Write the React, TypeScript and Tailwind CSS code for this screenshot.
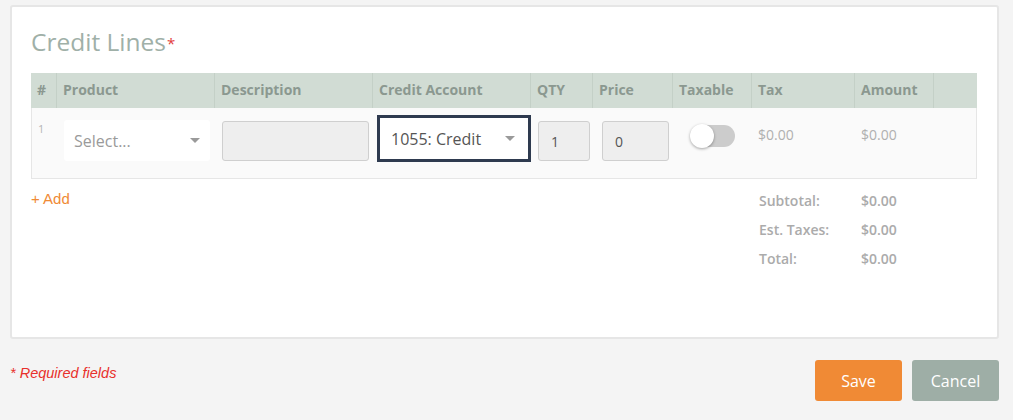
import React, { useState } from 'react';

const cols = 'grid grid-cols-[26px_158px_158px_158px_62px_80px_79px_103px_79px_1fr]';

const headers = ['#', 'Product', 'Description', 'Credit Account', 'QTY', 'Price', 'Taxable', 'Tax', 'Amount', ''];

const Caret = () => (
  <svg width="10" height="6" viewBox="0 0 10 6" className="shrink-0">
    <path d="M0 0h10L5 5z" fill="#9a9a9a" />
  </svg>
);

const App: React.FC = () => {
  const [taxable, setTaxable] = useState(false);

  return (
    <div className="w-[1013px] h-[420px] bg-[#f4f4f4] pt-[5px] pl-[10px] font-['Open_Sans',sans-serif]">
      <div className="w-[989px] h-[334px] bg-white border-2 border-[#e6e6e6] rounded-[3px] px-[19px] pt-[19px]">
        <h2 className="text-[24.5px] leading-[32px] text-[#9fb0a8] flex items-start">
          Credit Lines<span className="text-[#e23b3b] text-[15px] leading-[20px] mt-[7px] ml-[1px]">*</span>
        </h2>

        <div className="mt-[15px] w-[946px]">
          <div className={`${cols} bg-[#d1dcd4] h-[35px] text-[14px] font-bold text-[#8b9890]`}>
            {headers.map((h, i) => (
              <div
                key={i}
                className={`flex items-center px-[6px] pb-[2px] ${i < headers.length - 1 ? 'border-r border-[#c4d0c7]' : ''}`}
              >
                {h}
              </div>
            ))}
          </div>

          <div className={`${cols} bg-[#fafafa] border border-t-0 border-[#e6e6e6] h-[71px] text-[14px]`}>
            <div className="pl-[6px] pt-[13px] text-[11px] text-[#b5b5b5]">1</div>
            <div className="pl-[6px] pr-[6px] pt-[12px]">
              <div className="h-[41px] bg-white rounded-[3px] flex items-center justify-between pl-[10px] pr-[10px] text-[16px] text-[#9a9a9a]">
                <span>Select...</span>
                <Caret />
              </div>
            </div>
            <div className="pl-[6px] pr-[5px] pt-[13px]">
              <div className="h-[40px] bg-[#eeeeee] border border-[#cfcfcf] rounded-[3px]" />
            </div>
            <div className="pl-[3px] pr-[1px] pt-[7px]">
              <div className="h-[47px] bg-white border-[3px] border-[#2e3a4f] flex items-center justify-between pl-[11px] pr-[13px] text-[16px] text-[#555]">
                <span>1055: Credit</span>
                <Caret />
              </div>
            </div>
            <div className="pl-[6px] pr-[4px] pt-[13px]">
              <div className="h-[40px] bg-[#eeeeee] border border-[#cfcfcf] rounded-[3px] flex items-center pl-[12px] text-[14px] text-[#555]">
                1
              </div>
            </div>
            <div className="pl-[8px] pr-[5px] pt-[13px]">
              <div className="h-[40px] bg-[#eeeeee] border border-[#cfcfcf] rounded-[3px] flex items-center pl-[12px] text-[14px] text-[#555]">
                0
              </div>
            </div>
            <div className="pl-[17px] pt-[17px]">
              <button
                onClick={() => setTaxable(!taxable)}
                className={`relative w-[44px] h-[22px] rounded-full ${taxable ? 'bg-[#f08a35]' : 'bg-[#cccccc]'}`}
              >
                <span
                  className={`absolute top-[-1px] w-[24px] h-[24px] rounded-full bg-white shadow-[0_1px_3px_rgba(0,0,0,0.35)] ${taxable ? 'left-[21px]' : 'left-[-1px]'}`}
                />
              </button>
            </div>
            <div className="pl-[5px] pt-[16px] text-[#b0b0b0]">$0.00</div>
            <div className="pl-[5px] pt-[16px] text-[#b0b0b0]">$0.00</div>
            <div />
          </div>

          <div className="flex justify-between mt-[11px]">
            <button className="h-[17px] text-[15px] leading-[17px] text-[#f08a35] font-['Liberation_Sans',sans-serif] self-start">
              + Add
            </button>
            <div className="w-[218px] text-[14px] font-semibold text-[#ababab]">
              {[
                ['Subtotal:', '$0.00'],
                ['Est. Taxes:', '$0.00'],
                ['Total:', '$0.00'],
              ].map(([l, v]) => (
                <div key={l} className="flex h-[29px] items-start">
                  <span className="w-[102px]">{l}</span>
                  <span>{v}</span>
                </div>
              ))}
            </div>
          </div>
        </div>
      </div>

      <div className="flex justify-between items-start pr-[14px] mt-[21px]">
        <div className="mt-[3px] text-[14.5px] italic text-[#e8302b] font-['Liberation_Sans',sans-serif]">* Required fields</div>
        <div className="flex gap-[10px]">
          <button className="w-[87px] h-[41px] rounded-[3px] bg-[#f08a35] text-white text-[16px]">Save</button>
          <button className="w-[87px] h-[41px] rounded-[3px] bg-[#9eaea6] text-white text-[16px]">Cancel</button>
        </div>
      </div>
    </div>
  );
};

export default App;
